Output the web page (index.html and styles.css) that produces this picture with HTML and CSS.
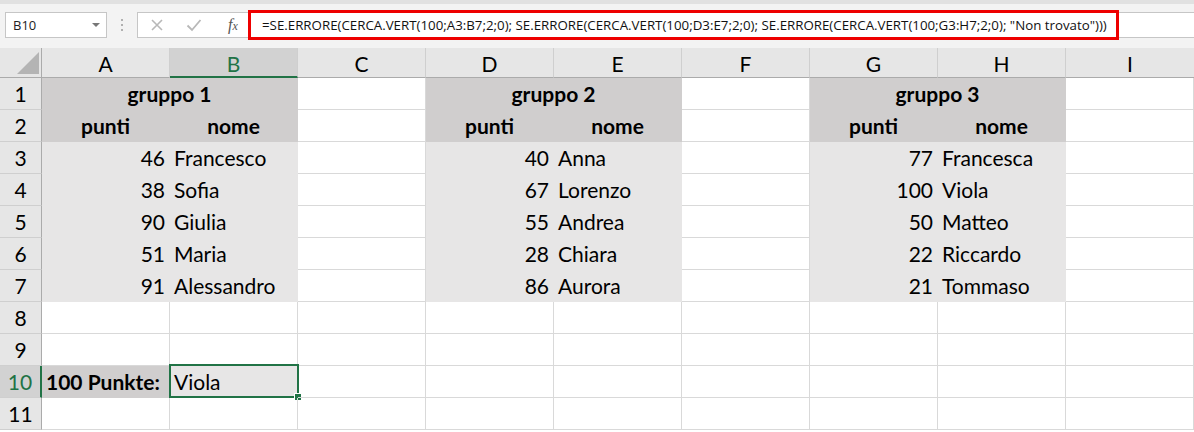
FILE: index.html
```html
<!DOCTYPE html>
<html lang="it">
<head>
<meta charset="utf-8">
<title>Excel</title>
<link rel="stylesheet" href="styles.css">
</head>
<body>
<div class="app">
  <div class="toolbar">
    <div class="namebox">
      <span class="namebox-text">B10</span>
      <span class="namebox-arrow"></span>
    </div>
    <div class="grip">
      <span></span><span></span><span></span>
    </div>
    <div class="formula">
      <div class="fx-icons">
        <svg class="ic" width="14" height="14" viewBox="0 0 14 14"><path d="M2 2 L12 12 M12 2 L2 12" stroke="#b8b8b8" stroke-width="1.6" fill="none"/></svg>
        <svg class="ic" width="16" height="14" viewBox="0 0 16 14"><path d="M1.5 7.5 L6 12 L14.5 2" stroke="#b8b8b8" stroke-width="1.8" fill="none"/></svg>
        <span class="fx">f<span class="fx-x">x</span></span>
      </div>
      <div class="formula-input">
        <span class="formula-text">=SE.ERRORE(CERCA.VERT(100;A3:B7;2;0); SE.ERRORE(CERCA.VERT(100;D3:E7;2;0); SE.ERRORE(CERCA.VERT(100;G3:H7;2;0); "Non trovato")))</span>
      </div>
    </div>
  </div>

  <div class="sheet">
    <div class="corner"><span class="tri"></span></div>
    <div class="ch">A</div>
    <div class="ch ch-sel">B</div>
    <div class="ch">C</div>
    <div class="ch">D</div>
    <div class="ch">E</div>
    <div class="ch">F</div>
    <div class="ch">G</div>
    <div class="ch">H</div>
    <div class="ch ch-last">I</div>

    <!-- row 1 -->
    <div class="rh">1</div>
    <div class="c dark span2 center b">gruppo 1</div>
    <div class="c"></div>
    <div class="c dark span2 center b">gruppo 2</div>
    <div class="c"></div>
    <div class="c dark span2 center b">gruppo 3</div>
    <div class="c"></div>

    <!-- row 2 -->
    <div class="rh">2</div>
    <div class="c dark center b">punti</div>
    <div class="c dark center b">nome</div>
    <div class="c"></div>
    <div class="c dark center b">punti</div>
    <div class="c dark center b">nome</div>
    <div class="c"></div>
    <div class="c dark center b">punti</div>
    <div class="c dark center b">nome</div>
    <div class="c"></div>

    <!-- row 3 -->
    <div class="rh">3</div>
    <div class="c light num">46</div>
    <div class="c light">Francesco</div>
    <div class="c"></div>
    <div class="c light num">40</div>
    <div class="c light">Anna</div>
    <div class="c"></div>
    <div class="c light num">77</div>
    <div class="c light">Francesca</div>
    <div class="c"></div>

    <!-- row 4 -->
    <div class="rh">4</div>
    <div class="c light num">38</div>
    <div class="c light">Sofia</div>
    <div class="c"></div>
    <div class="c light num">67</div>
    <div class="c light">Lorenzo</div>
    <div class="c"></div>
    <div class="c light num">100</div>
    <div class="c light">Viola</div>
    <div class="c"></div>

    <!-- row 5 -->
    <div class="rh">5</div>
    <div class="c light num">90</div>
    <div class="c light">Giulia</div>
    <div class="c"></div>
    <div class="c light num">55</div>
    <div class="c light">Andrea</div>
    <div class="c"></div>
    <div class="c light num">50</div>
    <div class="c light">Matteo</div>
    <div class="c"></div>

    <!-- row 6 -->
    <div class="rh">6</div>
    <div class="c light num">51</div>
    <div class="c light">Maria</div>
    <div class="c"></div>
    <div class="c light num">28</div>
    <div class="c light">Chiara</div>
    <div class="c"></div>
    <div class="c light num">22</div>
    <div class="c light">Riccardo</div>
    <div class="c"></div>

    <!-- row 7 -->
    <div class="rh">7</div>
    <div class="c light num">91</div>
    <div class="c light">Alessandro</div>
    <div class="c"></div>
    <div class="c light num">86</div>
    <div class="c light">Aurora</div>
    <div class="c"></div>
    <div class="c light num">21</div>
    <div class="c light">Tommaso</div>
    <div class="c"></div>

    <!-- row 8 -->
    <div class="rh">8</div>
    <div class="c"></div><div class="c"></div><div class="c"></div>
    <div class="c"></div><div class="c"></div><div class="c"></div>
    <div class="c"></div><div class="c"></div><div class="c"></div>

    <!-- row 9 -->
    <div class="rh">9</div>
    <div class="c"></div><div class="c"></div><div class="c"></div>
    <div class="c"></div><div class="c"></div><div class="c"></div>
    <div class="c"></div><div class="c"></div><div class="c"></div>

    <!-- row 10 -->
    <div class="rh rh-sel">10</div>
    <div class="c dark b">100 Punkte:</div>
    <div class="c light active">Viola<span class="sel-box"><span class="handle"></span></span></div>
    <div class="c"></div>
    <div class="c"></div><div class="c"></div><div class="c"></div>
    <div class="c"></div><div class="c"></div><div class="c"></div>

    <!-- row 11 -->
    <div class="rh">11</div>
    <div class="c"></div><div class="c"></div><div class="c"></div>
    <div class="c"></div><div class="c"></div><div class="c"></div>
    <div class="c"></div><div class="c"></div><div class="c"></div>
  </div>
</div>
</body>
</html>
```

FILE: styles.css
```css
* { box-sizing: border-box; }

html, body {
  margin: 0;
  padding: 0;
  background: #ffffff;
}

.app {
  width: 1194px;
  height: 432px;
  overflow: hidden;
  font-family: Lato, "Liberation Sans", sans-serif;
  color: #000;
}

/* ---------- formula bar ---------- */
.toolbar {
  height: 48px;
  background: #f3f3f3;
  border-top: 4px solid #e1e1e1;
  display: flex;
  align-items: flex-start;
  padding-top: 8px;
  padding-left: 5px;
}

.namebox {
  width: 102px;
  height: 26px;
  background: #fff;
  border: 1px solid #c6c6c6;
  display: flex;
  align-items: center;
  justify-content: space-between;
  padding: 0 6px 0 7px;
}

.namebox-text {
  font-family: "Open Sans", Lato, sans-serif;
  font-size: 13px;
  color: #222;
}

.namebox-arrow {
  width: 0;
  height: 0;
  border-left: 4px solid transparent;
  border-right: 4px solid transparent;
  border-top: 4px solid #777;
}

.grip {
  width: 30px;
  height: 26px;
  display: flex;
  flex-direction: column;
  align-items: center;
  justify-content: center;
  gap: 3px;
}

.grip span {
  width: 2px;
  height: 2px;
  background: #b0b0b0;
}

.formula {
  flex: 1;
  height: 26px;
  background: #fff;
  border: 1px solid #c6c6c6;
  border-right: none;
  display: flex;
  align-items: center;
  position: relative;
}

.fx-icons {
  width: 110px;
  display: flex;
  align-items: center;
  padding-left: 12px;
  gap: 22px;
}

.fx {
  font-family: "Liberation Serif", serif;
  font-style: italic;
  font-size: 16px;
  color: #555;
  margin-left: 4px;
}

.fx-x {
  font-size: 12px;
}

.formula-input {
  position: absolute;
  left: 110px;
  top: -3px;
  width: 871px;
  height: 30px;
  border: 3px solid #ee0000;
  display: flex;
  align-items: center;
  padding-left: 11px;
}

.formula-text {
  font-family: "Open Sans", Lato, sans-serif;
  font-size: 13.3px;
  color: #111;
  white-space: nowrap;
}

/* ---------- sheet ---------- */
.sheet {
  display: grid;
  grid-template-columns: 42px repeat(9, 128px);
  grid-template-rows: 30px repeat(11, 32px);
  font-size: 21px;
}

.corner {
  background: #e6e6e6;
  border-right: 1px solid #ababab;
  border-bottom: 1px solid #ababab;
  position: relative;
}

.tri {
  position: absolute;
  right: 2px;
  bottom: 3px;
  width: 0;
  height: 0;
  border-left: 22px solid transparent;
  border-bottom: 22px solid #b4b4b4;
}

.ch {
  background: #e6e6e6;
  border-right: 1px solid #cfcfcf;
  border-bottom: 1px solid #ababab;
  display: flex;
  align-items: center;
  justify-content: center;
  font-size: 21px;
  padding-top: 2px;
}

.ch-last { border-right: none; }

.ch-sel {
  background: #d2d2d2;
  color: #217346;
  border-bottom: 2px solid #217346;
  padding-top: 3px;
}

.rh {
  background: #e6e6e6;
  border-right: 1px solid #ababab;
  border-bottom: 1px solid #cfcfcf;
  display: flex;
  align-items: center;
  justify-content: center;
  font-size: 21px;
}

.rh-sel {
  background: #d2d2d2;
  color: #217346;
  border-right: 2px solid #217346;
}

.c {
  border-right: 1px solid #d9d9d9;
  border-bottom: 1px solid #d9d9d9;
  display: flex;
  align-items: center;
  padding: 0 4px 0 4px;
  white-space: nowrap;
  position: relative;
}

.span2 { grid-column: span 2; }

.center { justify-content: center; }

.num { justify-content: flex-end; padding-right: 4px; }

.b { font-weight: 700; }

.dark {
  background: #d0cece;
  border-color: #d0cece;
}

.light {
  background: #e7e6e6;
  border-color: #e7e6e6;
}

.active { border-color: #e7e6e6; }

.sel-box {
  position: absolute;
  left: -1px;
  top: -2px;
  right: -2px;
  bottom: -1px;
  border: 2px solid #217346;
}

.handle {
  position: absolute;
  right: -4px;
  bottom: -4px;
  width: 6px;
  height: 6px;
  background: #217346;
  outline: 1px solid #fff;
}
```
